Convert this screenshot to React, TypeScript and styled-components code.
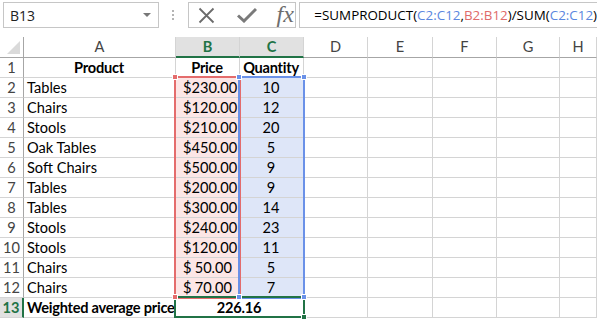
import React from 'react';
import styled, { createGlobalStyle, css } from 'styled-components';

const GlobalStyle = createGlobalStyle`
    html, body {
        margin: 0;
        padding: 0;
        background: #ffffff;
        overflow: hidden;
    }
    body {
        font-family: "Lato", "Liberation Sans", sans-serif;
    }
`;

const GREEN = '#217346';
const RED = '#e46c6c';
const BLUE = '#6a91e8';

const Page = styled.div`
    width: 597px;
    height: 320px;
    overflow: hidden;
`;

const Toolbar = styled.div`
    display: flex;
    align-items: flex-start;
    height: 37px;
    padding: 2px 0 0 3px;
    box-sizing: border-box;
`;

const NameBox = styled.div`
    position: relative;
    width: 156px;
    height: 26px;
    box-sizing: border-box;
    border: 1px solid #c6c6c6;
    display: flex;
    align-items: center;
    padding-left: 6px;
    font-family: "Open Sans", "Noto Sans", sans-serif;
    font-size: 14px;
    color: #222;
`;

const DropArrow = styled.span`
    position: absolute;
    right: 7px;
    top: 10px;
    width: 0;
    height: 0;
    border-left: 4px solid transparent;
    border-right: 4px solid transparent;
    border-top: 4px solid #777;
`;

const Grip = styled.div`
    width: 2px;
    margin: 8px 14px 0 13px;
    display: flex;
    flex-direction: column;
    gap: 2px;
    span {
        width: 2px;
        height: 2px;
        background: #b4b4b4;
    }
`;

const FxBox = styled.div`
    width: 109px;
    height: 26px;
    box-sizing: border-box;
    border: 1px solid #c6c6c6;
    display: flex;
    align-items: center;
    padding-left: 9px;
    gap: 22px;
`;

const FxText = styled.span`
    font-family: "Liberation Serif", serif;
    font-style: italic;
    font-size: 24px;
    color: #6d6d6d;
    line-height: 1;
    margin-top: -2px;
    margin-left: -2px;
`;

const FormulaBox = styled.div`
    flex: 1;
    height: 26px;
    margin-left: 3px;
    box-sizing: border-box;
    border: 1px solid #c6c6c6;
    border-right: none;
    display: flex;
    align-items: center;
    padding-left: 14px;
    font-family: "Open Sans", "Noto Sans", sans-serif;
    font-size: 13.4px;
    color: #000;
    white-space: nowrap;
`;

const Ref = styled.span<{ $c: string }>`
    color: ${p => p.$c};
`;

const SheetWrap = styled.div`
    position: relative;
`;

const Grid = styled.div`
    display: grid;
    grid-template-columns: 24px 152px 64px 64px 64px 65px 64px 63px 1fr;
    grid-template-rows: 21px repeat(13, 20px);
`;

type Tint = 'red' | 'blue' | undefined;

const Cell = styled.div<{ $align?: 'left' | 'center' | 'right'; $bold?: boolean; $tint?: Tint; $span?: number }>`
    box-sizing: border-box;
    border-right: 1px solid #d4d4d4;
    border-bottom: 1px solid #d4d4d4;
    font-size: 14.6px;
    line-height: 19px;
    color: #000;
    padding: 0 4px 0 3px;
    white-space: nowrap;
    overflow: visible;
    text-align: ${p => p.$align || 'left'};
    font-weight: ${p => (p.$bold ? 700 : 400)};
    letter-spacing: ${p => (p.$bold ? '-0.25px' : 'normal')};
    ${p => p.$span && css`grid-column: span ${p.$span};`}
    ${p => p.$tint === 'red' && css`background: #fce6e6;`}
    ${p => p.$tint === 'blue' && css`background: #dee6f8;`}
`;

const ColHead = styled.div<{ $sel?: boolean }>`
    box-sizing: border-box;
    border-right: 1px solid #d4d4d4;
    border-bottom: 1px solid #a6a6a6;
    font-size: 14.6px;
    line-height: 20px;
    text-align: center;
    color: #444;
    ${p => p.$sel && css`
        background: #e1e1e1;
        color: ${GREEN};
        font-weight: 700;
        border-bottom: 2px solid ${GREEN};
        line-height: 19px;
    `}
`;

const Corner = styled.div`
    position: relative;
    box-sizing: border-box;
    border-right: 1px solid #a6a6a6;
    border-bottom: 1px solid #a6a6a6;
    &::after {
        content: '';
        position: absolute;
        right: 3px;
        bottom: 3px;
        width: 0;
        height: 0;
        border-left: 13px solid transparent;
        border-bottom: 13px solid #dadada;
    }
`;

const RowHead = styled.div<{ $sel?: boolean }>`
    box-sizing: border-box;
    border-right: 1px solid #a6a6a6;
    border-bottom: 1px solid #d4d4d4;
    font-size: 14.6px;
    line-height: 19px;
    text-align: center;
    color: #444;
    ${p => p.$sel && css`
        background: #e1e1e1;
        color: ${GREEN};
        font-weight: 700;
        border-right: 2px solid ${GREEN};
    `}
`;

const Money = styled(Cell)`
    display: flex;
    justify-content: space-between;
    padding: 0 7px 0 7px;
`;

const RangeBox = styled.div<{ $color: string }>`
    position: absolute;
    box-sizing: border-box;
    border: 2px solid ${p => p.$color};
    pointer-events: none;
`;

const Handle = styled.div<{ $color: string }>`
    position: absolute;
    width: 6px;
    height: 6px;
    box-sizing: border-box;
    background: ${p => p.$color};
    border: 1px solid #ffffff;
    transform: translate(-50%, -50%);
`;

const rows: [string, number, number][] = [
    ['Tables', 230, 10],
    ['Chairs', 120, 12],
    ['Stools', 210, 20],
    ['Oak Tables', 450, 5],
    ['Soft Chairs', 500, 9],
    ['Tables', 200, 9],
    ['Tables', 300, 14],
    ['Stools', 240, 23],
    ['Stools', 120, 11],
    ['Chairs', 50, 5],
    ['Chairs', 70, 7],
];

const cols = ['A', 'B', 'C', 'D', 'E', 'F', 'G', 'H'];

// columns D..H are empty in every row
const Empties = () => (
    <>
        <Cell />
        <Cell />
        <Cell />
        <Cell />
        <Cell />
    </>
);

export default function App() {
    return (
        <Page>
            <GlobalStyle />
            <Toolbar>
                <NameBox>
                    B13
                    <DropArrow />
                </NameBox>
                <Grip>
                    <span />
                    <span />
                    <span />
                </Grip>
                <FxBox>
                    <svg width="17" height="17" viewBox="0 0 17 17">
                        <path d="M1.5 1.5 L15.5 15.5 M15.5 1.5 L1.5 15.5" stroke="#6b6b6b" strokeWidth="1.8" fill="none" />
                    </svg>
                    <svg width="20" height="16" viewBox="0 0 20 16">
                        <path d="M1 8.5 L7 14 L19 2" stroke="#7a7a7a" strokeWidth="3" fill="none" />
                    </svg>
                    <FxText>fx</FxText>
                </FxBox>
                <FormulaBox>
                    =SUMPRODUCT(<Ref $c="#5b87e0">C2:C12</Ref>,<Ref $c="#e06a6a">B2:B12</Ref>)/SUM(<Ref $c="#5b87e0">C2:C12</Ref>)
                </FormulaBox>
            </Toolbar>
            <SheetWrap>
                <Grid>
                    <Corner />
                    {cols.map(c => (
                        <ColHead key={c} $sel={c === 'B' || c === 'C'}>{c}</ColHead>
                    ))}

                    <RowHead>1</RowHead>
                    <Cell $bold $align="center">Product</Cell>
                    <Cell $bold $align="center">Price</Cell>
                    <Cell $bold $align="center">Quantity</Cell>
                    <Empties />

                    {rows.map(([name, price, qty], i) => (
                        <React.Fragment key={i}>
                            <RowHead>{i + 2}</RowHead>
                            <Cell>{name}</Cell>
                            <Money $tint="red">
                                <span>$</span>
                                <span>{price.toFixed(2)}</span>
                            </Money>
                            <Cell $tint="blue" $align="center">{qty}</Cell>
                            <Empties />
                        </React.Fragment>
                    ))}

                    <RowHead $sel>13</RowHead>
                    <Cell $bold>Weighted average price</Cell>
                    <Cell $bold $align="center" $span={2}>226.16</Cell>
                    <Empties />
                </Grid>

                <RangeBox $color={RED} style={{ left: 174, top: 39, width: 67, height: 223 }} />
                <RangeBox $color={BLUE} style={{ left: 238, top: 39, width: 67, height: 223 }} />
                <RangeBox $color={GREEN} style={{ left: 174, top: 259, width: 131, height: 22 }} />
                <Handle $color={RED} style={{ left: 175, top: 40 }} />
                <Handle $color={BLUE} style={{ left: 239, top: 40 }} />
                <Handle $color={BLUE} style={{ left: 304, top: 40 }} />
                <Handle $color={RED} style={{ left: 175, top: 260 }} />
                <Handle $color={BLUE} style={{ left: 239, top: 260 }} />
                <Handle $color={BLUE} style={{ left: 304, top: 260 }} />
                <Handle $color={GREEN} style={{ left: 304, top: 280 }} />
            </SheetWrap>
        </Page>
    );
}
